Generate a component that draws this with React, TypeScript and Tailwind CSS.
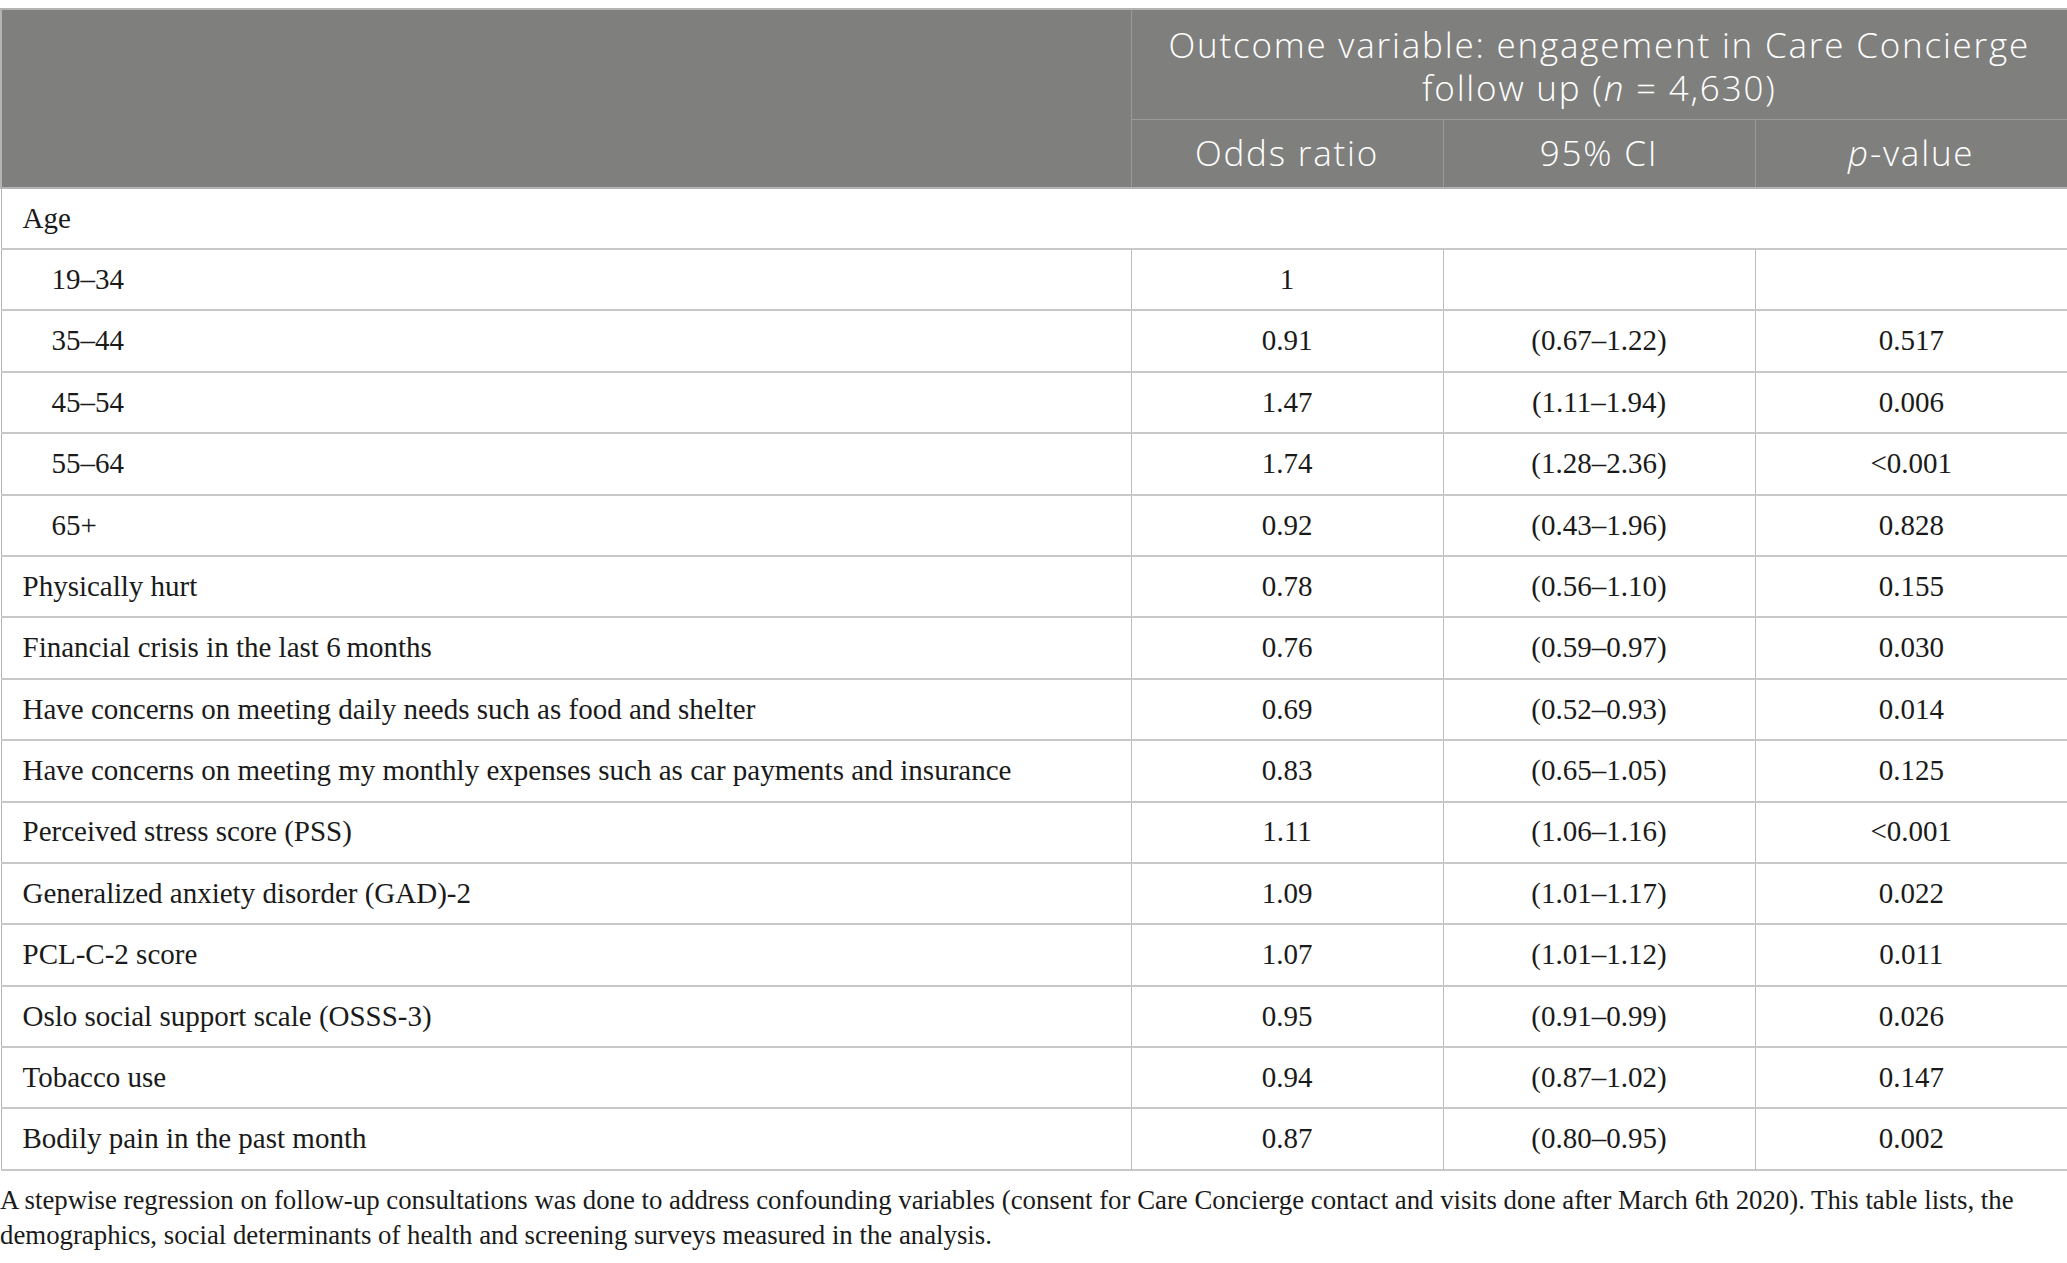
import React from "react";

type Row = { label: string; indent?: boolean; or?: string; ci?: string; p?: string; section?: boolean };

const rows: Row[] = [
  { label: "Age", section: true },
  { label: "19–34", indent: true, or: "1", ci: "", p: "" },
  { label: "35–44", indent: true, or: "0.91", ci: "(0.67–1.22)", p: "0.517" },
  { label: "45–54", indent: true, or: "1.47", ci: "(1.11–1.94)", p: "0.006" },
  { label: "55–64", indent: true, or: "1.74", ci: "(1.28–2.36)", p: "<0.001" },
  { label: "65+", indent: true, or: "0.92", ci: "(0.43–1.96)", p: "0.828" },
  { label: "Physically hurt", or: "0.78", ci: "(0.56–1.10)", p: "0.155" },
  { label: "Financial crisis in the last 6\u2009months", or: "0.76", ci: "(0.59–0.97)", p: "0.030" },
  { label: "Have concerns on meeting daily needs such as food and shelter", or: "0.69", ci: "(0.52–0.93)", p: "0.014" },
  { label: "Have concerns on meeting my monthly expenses such as car payments and insurance", or: "0.83", ci: "(0.65–1.05)", p: "0.125" },
  { label: "Perceived stress score (PSS)", or: "1.11", ci: "(1.06–1.16)", p: "<0.001" },
  { label: "Generalized anxiety disorder (GAD)-2", or: "1.09", ci: "(1.01–1.17)", p: "0.022" },
  { label: "PCL-C-2 score", or: "1.07", ci: "(1.01–1.12)", p: "0.011" },
  { label: "Oslo social support scale (OSSS-3)", or: "0.95", ci: "(0.91–0.99)", p: "0.026" },
  { label: "Tobacco use", or: "0.94", ci: "(0.87–1.02)", p: "0.147" },
  { label: "Bodily pain in the past month", or: "0.87", ci: "(0.80–0.95)", p: "0.002" },
];

const serif = { fontFamily: '"Liberation Serif", "Times New Roman", serif' };

export default function App() {
  return (
    <div className="w-[2067px] h-[1263px] bg-white overflow-hidden pt-[8px]">
      <table
        className="w-[2067px] border-collapse table-fixed text-[#1a1a1a]"
        style={serif}
      >
        <colgroup>
          <col className="w-[1130px]" />
          <col className="w-[312px]" />
          <col className="w-[312px]" />
          <col className="w-[313px]" />
        </colgroup>
        <thead className="font-['Open_Sans',sans-serif] font-light text-white">
          <tr className="h-[110px]">
            <th className="bg-[#7f807e] border-[2px] border-[#b4b4b4] border-r border-r-[#9a9a9a]" rowSpan={2}></th>
            <th
              colSpan={3}
              className="bg-[#7f807e] border-t-[2px] border-t-[#b4b4b4] border-r-[2px] border-r-[#b4b4b4] border-b border-b-[#9a9a9a] text-[35px] tracking-[1.8px] font-light text-center px-2 pt-1"
            >
              <div className="leading-[43px] h-[43px]">Outcome variable: engagement in Care Concierge</div>
              <div className="leading-[43px] h-[43px]">
                follow up (<i>n</i> = 4,630)
              </div>
            </th>
          </tr>
          <tr className="h-[69px]">
            <th className="bg-[#7f807e] border-r border-[#9a9a9a] border-b-[2px] border-b-[#b4b4b4] text-[35px] tracking-[1.8px] font-light text-center">
              Odds ratio
            </th>
            <th className="bg-[#7f807e] border-r border-[#9a9a9a] border-b-[2px] border-b-[#b4b4b4] text-[35px] tracking-[1.8px] font-light text-center">
              95% CI
            </th>
            <th className="bg-[#7f807e] border-r-[2px] border-r-[#b4b4b4] border-b-[2px] border-b-[#b4b4b4] text-[35px] tracking-[1.8px] font-light text-center">
              <i>p</i>-value
            </th>
          </tr>
        </thead>
        <tbody className="text-[29px]">
          {rows.map((r, i) =>
            r.section ? (
              <tr key={i} className="h-[61px]">
                <td
                  colSpan={4}
                  className="border-l border-l-[#b4b4b4] border-r-[2px] border-r-[#b4b4b4] border-b-[2px] border-b-[#c8c8c8] pl-[21px]"
                >
                  {r.label}
                </td>
              </tr>
            ) : (
              <tr key={i} className="h-[61.4px]">
                <td
                  className={`border-l border-l-[#b4b4b4] border-r border-r-[#bdbdbd] border-b-[2px] border-b-[#c8c8c8] ${
                    r.indent ? "pl-[50px]" : "pl-[21px]"
                  }`}
                >
                  {r.label}
                </td>
                <td className="border-r border-r-[#bdbdbd] border-b-[2px] border-b-[#c8c8c8] text-center">{r.or}</td>
                <td className="border-r border-r-[#bdbdbd] border-b-[2px] border-b-[#c8c8c8] text-center">{r.ci}</td>
                <td className="border-r-[2px] border-r-[#b4b4b4] border-b-[2px] border-b-[#c8c8c8] text-center">{r.p}</td>
              </tr>
            )
          )}
        </tbody>
      </table>
      <p className="text-[26.8px] leading-[35px] text-[#1a1a1a] mt-[12px]" style={serif}>
        A stepwise regression on follow-up consultations was done to address confounding variables (consent for Care Concierge contact and visits done after March 6th 2020). This table lists, the demographics, social determinants of health and screening surveys measured in the analysis.
      </p>
    </div>
  );
}
